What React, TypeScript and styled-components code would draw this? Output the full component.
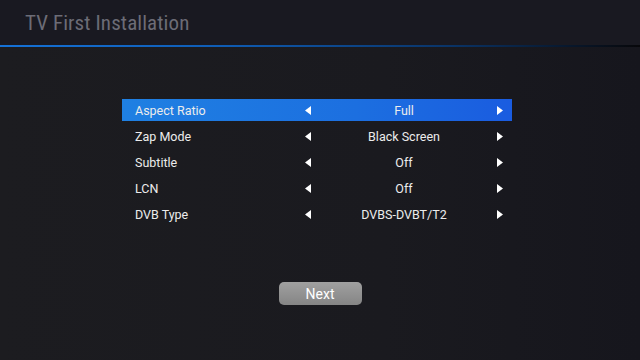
import React from 'react';
import styled, { createGlobalStyle } from 'styled-components';

interface Option {
    label: string;
    value: string;
}

const options: Option[] = [
    { label: 'Aspect Ratio', value: 'Full' },
    { label: 'Zap Mode', value: 'Black Screen' },
    { label: 'Subtitle', value: 'Off' },
    { label: 'LCN', value: 'Off' },
    { label: 'DVB Type', value: 'DVBS-DVBT/T2' },
];

const Arrow: React.FC<{ dir: 'left' | 'right' }> = ({ dir }) => (
    <svg width="6" height="9" viewBox="0 0 6 9">
        {dir === 'left' ? <path d="M6 0 L0 4.5 L6 9 Z" fill="#fff" /> : <path d="M0 0 L6 4.5 L0 9 Z" fill="#fff" />}
    </svg>
);

const App: React.FC = () => {
    return (
        <>
            <GlobalStyle />
            <Screen>
                <Header>
                    <Title>TV First Installation</Title>
                </Header>
                <Divider />
                <Main>
                    <Menu>
                        {options.map((o, i) => (
                            <Row key={o.label} active={i === 0}>
                                <Label>{o.label}</Label>
                                <Arrow dir="left" />
                                <Value>{o.value}</Value>
                                <Arrow dir="right" />
                            </Row>
                        ))}
                    </Menu>
                    <NextButton>Next</NextButton>
                </Main>
            </Screen>
        </>
    );
};

const GlobalStyle = createGlobalStyle`
  html, body {
    margin: 0;
    padding: 0;
    background: #1a1a1f;
  }
  * { box-sizing: border-box; }
`;

const Screen = styled.div`
  width: 640px;
  height: 360px;
  overflow: hidden;
  display: flex;
  flex-direction: column;
  font-family: Roboto, "Liberation Sans", sans-serif;
  background: linear-gradient(90deg, #1c1c20 0%, #1a1a1f 60%, #16161d 100%);
`;

const Header = styled.div`
  height: 45px;
  padding-left: 25px;
  display: flex;
  align-items: center;
  background: #191921;
`;

const Title = styled.h1`
  margin: 0;
  font-family: "Roboto Condensed", "Liberation Sans Narrow", Roboto, sans-serif;
  font-weight: normal;
  font-size: 21px;
  color: #6c6c76;
  letter-spacing: 0.1px;
`;

const Divider = styled.div`
  height: 2px;
  background: linear-gradient(90deg, #1572d8 0%, #0f5cb4 35%, #0a3468 70%, #07070a 100%);
`;

const Main = styled.div`
  flex: 1;
  display: flex;
  flex-direction: column;
  align-items: center;
  padding-top: 52px;
`;

const Menu = styled.div`
  width: 390px;
  margin-left: -6px;
  display: flex;
  flex-direction: column;
  gap: 4px;
`;

const Row = styled.div<{ active?: boolean }>`
  height: 22px;
  display: grid;
  grid-template-columns: 170px 6px 1fr 6px;
  align-items: center;
  padding: 0 9px 0 13px;
  color: #ececec;
  font-size: 12.5px;
  background: ${p => (p.active ? 'linear-gradient(90deg, #1f80e2 0%, #1c6fe0 60%, #1a5ce0 100%)' : 'transparent')};

  svg {
    display: block;
  }
`;

const Label = styled.span`
  white-space: nowrap;
`;

const Value = styled.span`
  text-align: center;
  white-space: nowrap;
`;

const NextButton = styled.button`
  margin-top: 57px;
  width: 83px;
  height: 23px;
  border: none;
  border-radius: 5px;
  background: linear-gradient(180deg, #a0a0a0 0%, #858585 100%);
  color: #fff;
  font-family: Roboto, "Liberation Sans", sans-serif;
  font-size: 14px;
  padding: 0;
`;

export default App;
